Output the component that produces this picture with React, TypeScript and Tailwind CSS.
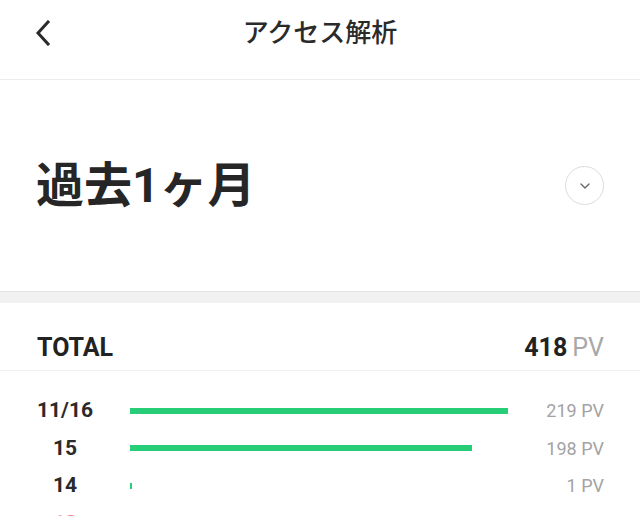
import { ChevronDown } from "lucide-react";

interface DayRow {
  label: string;
  pv: number;
  holiday?: boolean;
}

const rows: DayRow[] = [
  { label: "11/16", pv: 219 },
  { label: "15", pv: 198 },
  { label: "14", pv: 1 },
  { label: "13", pv: 0, holiday: true },
  { label: "12", pv: 0 },
];

const maxPv = 219;

const BackIcon = () => (
  <svg width="18" height="26" viewBox="0 0 18 26" fill="none">
    <path
      d="M14 2 L4 13 L14 24"
      stroke="#2b2b2b"
      strokeWidth="3"
      strokeLinecap="square"
      strokeLinejoin="miter"
    />
  </svg>
);

export default function App() {
  return (
    <div
      className="w-[640px] bg-white text-[#262626]"
      style={{ fontFamily: '"Roboto", "Noto Sans CJK JP", sans-serif' }}
    >
      {/* header */}
      <div className="grid h-[80px] grid-cols-[100px_1fr_100px] items-center border-b border-[#ececec] pb-[14px]">
        <div className="flex pl-[34px]">
          <BackIcon />
        </div>
        <div className="text-center text-[26px] font-medium leading-none text-[#2a2a2a]">
          アクセス解析
        </div>
        <div />
      </div>

      {/* period */}
      <div className="flex h-[211px] items-center justify-between pl-[36px] pr-[36px]">
        <div className="text-[48px] font-bold leading-none text-[#262626]">
          過去1ヶ月
        </div>
        <button className="flex h-[39px] w-[39px] items-center justify-center rounded-full border border-[#dcdcdc]">
          <ChevronDown size={16} strokeWidth={2} className="text-[#666]" />
        </button>
      </div>

      <div className="h-[12px] border-t border-[#e4e4e4] bg-[#f1f1f1]" />

      {/* total */}
      <div className="flex h-[68px] items-center justify-between border-b border-[#f0f0f0] pl-[37px] pr-[36px] pt-[22px]">
        <div className="text-[25px] font-bold text-[#222]">TOTAL</div>
        <div className="flex items-baseline gap-[5px] text-[25px]">
          <span className="font-bold text-[#222]">418</span>
          <span className="text-[#a8a8a8]">PV</span>
        </div>
      </div>

      {/* days */}
      <div className="pt-[21px] pl-[37px] pr-[36px]">
        {rows.map((row) => (
          <div key={row.label} className="flex h-[37.5px] items-center">
            <div
              className={`w-[56px] text-center text-[21px] font-bold ${
                row.holiday ? "text-[#f07a86]" : "text-[#2a2a2a]"
              }`}
            >
              {row.label}
            </div>
            <div className="ml-[37px] flex-1">
              {row.pv > 0 && (
                <div
                  className="h-[6px] bg-[#28cd78]"
                  style={{ width: `${Math.max(2, (row.pv / maxPv) * 378)}px` }}
                />
              )}
            </div>
            <div className="w-[96px] text-right text-[18px] text-[#a3a3a3]">
              {row.pv} PV
            </div>
          </div>
        ))}
      </div>
    </div>
  );
}
